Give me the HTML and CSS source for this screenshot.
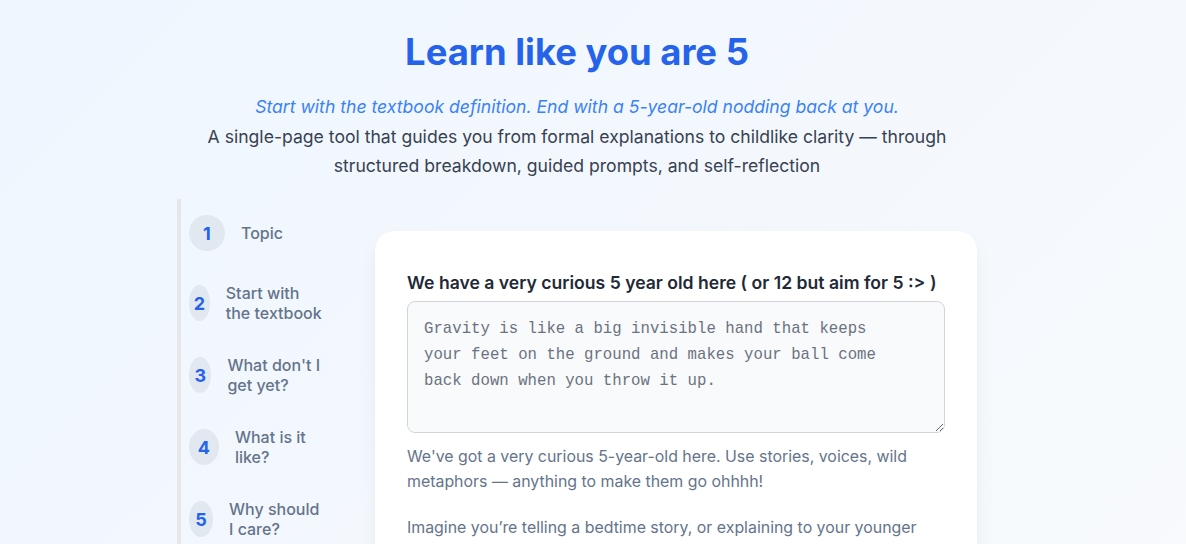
FILE: index.html
```html
<!DOCTYPE html>
<html lang="en">
<head>
<meta charset="utf-8">
<title>Learn like you are 5</title>
<link rel="stylesheet" href="styles.css">
</head>
<body>
<div class="page">
  <header class="hero">
    <h1 class="title">Learn like you are 5</h1>
    <p class="tagline">Start with the textbook definition. End with a 5-year-old nodding back at you.</p>
    <p class="intro">A single-page tool that guides you from formal explanations to childlike clarity — through structured breakdown, guided prompts, and self-reflection</p>
  </header>
  <div class="layout">
    <nav class="steps">
      <button class="step"><span class="num">1</span><span class="label">Topic</span></button>
      <button class="step"><span class="num">2</span><span class="label">Start with the textbook</span></button>
      <button class="step"><span class="num">3</span><span class="label">What don't I get yet?</span></button>
      <button class="step"><span class="num">4</span><span class="label">What is it like?</span></button>
      <button class="step"><span class="num">5</span><span class="label">Why should I care?</span></button>
    </nav>
    <main class="main">
      <section class="card">
        <label class="field-label" for="eli5">We have a very curious 5 year old here ( or 12 but aim for 5 :&gt; )</label>
        <textarea id="eli5" class="field" placeholder="Gravity is like a big invisible hand that keeps your feet on the ground and makes your ball come back down when you throw it up."></textarea>
        <p class="hint">We've got a very curious 5-year-old here. Use stories, voices, wild metaphors — anything to make them go ohhhh!</p>
        <p class="hint hint-gap">Imagine you’re telling a bedtime story, or explaining to your younger sibling why the sky is blue.</p>
      </section>
    </main>
  </div>
</div>
</body>
</html>
```
FILE: styles.css
```css
* { box-sizing: border-box; }
html, body { margin: 0; padding: 0; }
body {
  font-family: Inter, "Noto Sans", sans-serif;
  min-height: 100vh;
  background: linear-gradient(135deg, #eff6ff 0%, #f8fafc 100%);
  color: #1f2937;
}
.page {
  max-width: 896px;
  margin: 0 auto;
  padding: 32px 64px 0 32px;
}
.hero { text-align: center; margin-bottom: 19px; }
.title {
  margin: 0;
  font-size: 36.4px;
  line-height: 40px;
  font-weight: 700;
  color: #2563eb;
}
.tagline {
  margin: 20px 0 0;
  font-size: 17.6px;
  line-height: 29px;
  font-style: italic;
  color: #3b82f6;
}
.intro {
  margin: 1px auto 0;
  max-width: 768px;
  font-size: 17.6px;
  line-height: 29px;
  color: #374151;
}
.layout { display: flex; align-items: flex-start; gap: 9px; }
.steps {
  flex: 0 0 157px;
  width: 157px;
  border-left: 4px solid #e5e7eb;
  padding: 8px 0 8px;
  display: flex;
  flex-direction: column;
  gap: 16px;
}
.step {
  display: flex;
  align-items: center;
  gap: 16px;
  padding: 8px;
  border: 0;
  background: transparent;
  text-align: left;
  font-family: inherit;
  cursor: pointer;
}
.num {
  width: 36px;
  height: 36px;
  border-radius: 50%;
  background: #e2e8f0;
  color: #2563eb;
  font-weight: 700;
  font-size: 18px;
  display: flex;
  align-items: center;
  justify-content: center;
}
.label {
  font-size: 16px;
  line-height: 20px;
  font-weight: 500;
  color: #64748b;
}
.main { flex: 1; padding: 32px 0 32px 32px; }
.card {
  background: #fff;
  border-radius: 20px;
  box-shadow: 0 10px 25px -5px rgba(15, 23, 42, 0.08), 0 4px 10px -4px rgba(15, 23, 42, 0.05);
  padding: 40px 32px 32px;
}
.field-label {
  display: block;
  font-size: 17.6px;
  line-height: 24px;
  font-weight: 600;
  color: #1f2937;
  margin-bottom: 6px;
}
.field {
  display: block;
  width: 100%;
  height: 132px;
  padding: 14px 36px 10px 16px;
  border: 1px solid #d1d5db;
  border-radius: 8px;
  background: #f8fafc;
  font-family: "Liberation Mono", monospace;
  font-size: 15.7px;
  line-height: 26px;
  color: #1f2937;
  resize: vertical;
}
.field::placeholder { color: #6b7280; }
.hint {
  margin: 11px 0 0;
  font-size: 15.9px;
  line-height: 25px;
  color: #64748b;
}
.hint-gap { margin-top: 21px; }
```
